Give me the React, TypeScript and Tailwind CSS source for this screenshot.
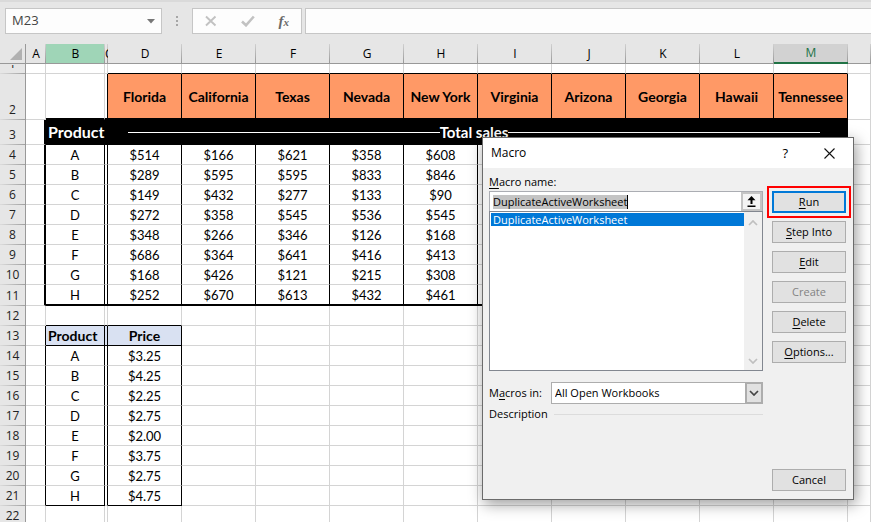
import React, { useState } from "react";

const GRID = "border-[#d4d4d4]";

const states = [
  "Florida",
  "California",
  "Texas",
  "Nevada",
  "New York",
  "Virginia",
  "Arizona",
  "Georgia",
  "Hawaii",
  "Tennessee",
];

const columns = ["A", "B", "C", "D", "E", "F", "G", "H", "I", "J", "K", "L", "M", ""];

const sales = [
  { row: 4, product: "A", values: ["$514", "$166", "$621", "$358", "$608"] },
  { row: 5, product: "B", values: ["$289", "$595", "$595", "$833", "$846"] },
  { row: 6, product: "C", values: ["$149", "$432", "$277", "$133", "$90"] },
  { row: 7, product: "D", values: ["$272", "$358", "$545", "$536", "$545"] },
  { row: 8, product: "E", values: ["$348", "$266", "$346", "$126", "$168"] },
  { row: 9, product: "F", values: ["$686", "$364", "$641", "$416", "$413"] },
  { row: 10, product: "G", values: ["$168", "$426", "$121", "$215", "$308"] },
  { row: 11, product: "H", values: ["$252", "$670", "$613", "$432", "$461"] },
];

const prices = [
  { row: 14, product: "A", price: "$3.25" },
  { row: 15, product: "B", price: "$4.25" },
  { row: 16, product: "C", price: "$2.25" },
  { row: 17, product: "D", price: "$2.75" },
  { row: 18, product: "E", price: "$2.00" },
  { row: 19, product: "F", price: "$3.75" },
  { row: 20, product: "G", price: "$2.75" },
  { row: 21, product: "H", price: "$4.75" },
];

function Toolbar() {
  return (
    <div className="flex bg-[#e6e6e6] border-t-2 border-[#dadada] pt-1.5 pb-2.5 pl-[5px]">
      <div className="flex h-[26px] w-[157px] items-center border border-[#c6c6c6] bg-[#fdfdfd] pr-1.5">
        <input
          aria-label="Name Box"
          defaultValue="M23"
          className="min-w-0 flex-1 bg-transparent pl-1.5 font-['Open_Sans',sans-serif] text-[13px] text-[#444] outline-none"
        />
        <button aria-label="Show names">
          <svg width="8" height="5" viewBox="0 0 8 5">
            <path d="M0 0h8L4 4.5z" fill="#777" />
          </svg>
        </button>
      </div>
      <div className="flex w-[30px] flex-col items-center justify-center gap-0.5">
        <span className="size-0.5 bg-[#a6a6a6]" />
        <span className="size-0.5 bg-[#a6a6a6]" />
        <span className="size-0.5 bg-[#a6a6a6]" />
      </div>
      <div className="mr-[3px] flex h-[26px] w-[110px] items-center justify-between border border-[#c6c6c6] bg-[#fdfdfd] px-3">
        <button aria-label="Cancel entry">
          <svg width="12" height="12" viewBox="0 0 12 12">
            <path d="M1 1.5l9.5 9M10.5 1.5L1 10.5" stroke="#c2c2c2" strokeWidth="1.9" fill="none" />
          </svg>
        </button>
        <button aria-label="Enter">
          <svg width="14" height="12" viewBox="0 0 14 12">
            <path d="M1 6.5l4 3.8L12.8 1.5" stroke="#c2c2c2" strokeWidth="2.6" fill="none" />
          </svg>
        </button>
        <button
          aria-label="Insert function"
          className="font-['Liberation_Serif',serif] text-[15px] leading-none font-bold text-[#6a6a6a] italic"
        >
          f<span className="text-[11px]">x</span>
        </button>
      </div>
      <input
        aria-label="Formula bar"
        className="h-[26px] min-w-0 flex-1 border border-r-0 border-[#c6c6c6] bg-[#fdfdfd] px-1 outline-none"
      />
    </div>
  );
}

function ColumnHeader({ name }: { name: string }) {
  let look = "border-b border-[#999] text-black";
  if (name === "B") look = "border-b border-[#999] bg-[#9fd5b7] text-black";
  if (name === "M") look = "border-b-2 border-[#217346] bg-[#d2d2d2] text-[#217346]";
  return (
    <th
      scope="col"
      className={`h-5 overflow-hidden bg-[linear-gradient(to_bottom,#d0d0d0,#999)] bg-[length:1px_100%] bg-right bg-no-repeat p-0 text-center font-['Open_Sans',sans-serif] text-[12px] leading-[18px] font-normal ${look}`}
    >
      {name}
    </th>
  );
}

function RowHeader({ n }: { n: number }) {
  return (
    <th
      scope="row"
      className="border-r border-[#999] bg-[#e6e6e6] bg-[linear-gradient(to_right,#dcdcdc,#a0a0a0)] bg-[length:100%_1px] bg-bottom bg-no-repeat p-0 pb-px text-center align-bottom font-['Open_Sans',sans-serif] text-[12px] leading-[19px] font-normal text-[#222]"
    >
      {n === 1 ? <div className="flex h-[8px] items-end justify-center overflow-hidden">{n}</div> : n}
    </th>
  );
}

function Cell({ className = "", children }: { className?: string; children?: React.ReactNode }) {
  return <td className={`overflow-hidden border-r border-b p-0 text-center whitespace-nowrap ${className}`}>{children}</td>;
}

function Blanks({ count, className = GRID }: { count: number; className?: string }) {
  return (
    <>
      {Array.from({ length: count }, (_, i) => (
        <Cell key={i} className={className} />
      ))}
    </>
  );
}

function Sheet() {
  return (
    <table className="w-full table-fixed border-separate border-spacing-0 bg-white font-['Lato',sans-serif] text-[13px] leading-[18px] text-black">
      <colgroup>
        <col className="w-[26px]" />
        <col className="w-[20px]" />
        <col className="w-[59px]" />
        <col className="w-[3px]" />
        {states.map((s) => (
          <col key={s} className="w-[74px]" />
        ))}
        <col />
      </colgroup>
      <thead>
        <tr className="bg-[#e6e6e6]">
          <th className="border-r border-b border-[#999] p-0 align-bottom">
            <svg width="12" height="12" viewBox="0 0 12 12" className="mb-[3px] ml-auto mr-[3px] block">
              <path d="M12 0v12H0z" fill="#b1b1b1" />
            </svg>
          </th>
          {columns.map((c) => (
            <ColumnHeader key={c} name={c} />
          ))}
        </tr>
      </thead>
      <tbody>
        <tr className="h-[10px]">
          <RowHeader n={1} />
          <Blanks count={3} />
          <Blanks count={10} className="border-r-[#d4d4d4] border-b-black" />
          <Blanks count={1} />
        </tr>
        <tr className="h-[46px] text-[14px] font-bold">
          <RowHeader n={2} />
          <Blanks count={1} />
          <Cell className="border-b-2 border-r-[#d4d4d4] border-b-black" />
          <Cell className="border-b-2 border-black" />
          {states.map((s) => (
            <Cell key={s} className="border-b-2 border-black bg-[#ff9966] pt-0.5">
              {s}
            </Cell>
          ))}
          <Blanks count={1} />
        </tr>
        <tr className="h-[25px] text-[16px] font-bold text-white">
          <RowHeader n={3} />
          <Cell className="border-r-2 border-r-black border-b-[#d4d4d4]" />
          <td className="border-b border-black bg-black p-0 pl-0.5 text-left">Product</td>
          <td colSpan={11} className="border-b border-black bg-black p-0 pr-[28px] pl-[23px]">
            <div className="flex items-center">
              <span className="h-px flex-1 bg-white" />
              <span className="text-[15px]">Total sales</span>
              <span className="h-px flex-1 bg-white" />
            </div>
          </td>
          <Blanks count={1} />
        </tr>
        {sales.map(({ row, product, values }) => {
          const last = row === 11;
          const side = last ? "border-b-2 border-black" : "border-r-black border-b-[#d4d4d4]";
          return (
            <tr key={row} className={last ? "h-[21px]" : "h-[20px]"}>
              <RowHeader n={row} />
              <Cell className="border-r-2 border-r-black border-b-[#d4d4d4]" />
              <Cell className={side}>{product}</Cell>
              <Cell className={side} />
              {values.map((v, i) => (
                <Cell key={i} className={side}>
                  {v}
                </Cell>
              ))}
              <Blanks count={5} className={side} />
              <Blanks count={1} />
            </tr>
          );
        })}
        <tr className="h-[20px]">
          <RowHeader n={12} />
          <Blanks count={1} />
          <Blanks count={3} className="border-r-[#d4d4d4] border-b-black" />
          <Blanks count={10} />
        </tr>
        <tr className="h-[20px] text-[14px] font-bold">
          <RowHeader n={13} />
          <Cell className="border-r-black border-b-[#d4d4d4]" />
          <td className="border-r border-b border-black bg-[#d9e1f2] p-0 pl-0.5 text-left">Product</td>
          <Cell className="border-black bg-[#d9e1f2]" />
          <Cell className="border-black bg-[#d9e1f2]">Price</Cell>
          <Blanks count={10} />
        </tr>
        {prices.map(({ row, product, price }) => {
          const side = row === 21 ? "border-black" : "border-r-black border-b-[#d4d4d4]";
          return (
            <tr key={row} className="h-[20px]">
              <RowHeader n={row} />
              <Cell className="border-r-black border-b-[#d4d4d4]" />
              <Cell className={side}>{product}</Cell>
              <Cell className="border-r-black border-b-[#d4d4d4]" />
              <Cell className={side}>{price}</Cell>
              <Blanks count={10} />
            </tr>
          );
        })}
        <tr className="h-[20px]">
          <RowHeader n={22} />
          <Blanks count={14} />
        </tr>
      </tbody>
    </table>
  );
}

function DialogButton({ hot, rest, className = "border border-[#adadad]", disabled }: {
  hot?: string;
  rest: string;
  className?: string;
  disabled?: boolean;
}) {
  return (
    <button
      disabled={disabled}
      className={`h-[22px] w-full bg-[#e1e1e1] text-center leading-[18px] disabled:text-[#838383] ${className}`}
    >
      {hot && <span className="underline underline-offset-2">{hot}</span>}
      {rest}
    </button>
  );
}

function Chevron({ up, color }: { up?: boolean; color: string }) {
  return (
    <svg width="10" height="6" viewBox="0 0 10 6" className="block">
      <path d={up ? "M1 5l4-4 4 4" : "M1 1l4 4 4-4"} stroke={color} strokeWidth="1.7" fill="none" />
    </svg>
  );
}

function MacroDialog() {
  const [scope, setScope] = useState("All Open Workbooks");

  return (
    <div
      role="dialog"
      aria-label="Macro"
      className="absolute top-[137px] left-[482px] flex h-[363px] w-[372px] flex-col border border-[#6b6b6b] bg-[#f0f0f0] font-['Open_Sans',sans-serif] text-[11px] leading-[16px] text-black shadow-[2px_4px_14px_rgba(0,0,0,0.4)]"
    >
      <div className="flex h-[30px] shrink-0 items-center bg-white pr-[18px] pl-2">
        <h1 className="flex-1 text-[12px]">Macro</h1>
        <button aria-label="Help" className="mr-9 text-[13px]">
          ?
        </button>
        <button aria-label="Close">
          <svg width="11" height="11" viewBox="0 0 11 11" className="block">
            <path d="M.5.5l10 10M10.5.5l-10 10" stroke="#111" strokeWidth="1.1" fill="none" />
          </svg>
        </button>
      </div>

      <div className="flex flex-1 gap-[9px] pr-[7px] pb-2 pl-1.5">
        <div className="flex flex-1 flex-col pt-1.5">
          <label htmlFor="macro-name" className="mb-px">
            <span className="underline underline-offset-2">M</span>acro name:
          </label>
          <div className="flex h-[20px] items-center border border-b-0 border-[#abadb3] bg-white pl-[3px]">
            <input
              id="macro-name"
              readOnly
              value="DuplicateActiveWorksheet"
              className="field-sizing-content h-[14px] border-r border-black bg-[#c4c4c4] outline-none"
            />
            <button
              aria-label="Select reference"
              className="ml-auto flex h-[19px] w-[21px] items-center justify-center border-2 border-[#c4c4c4] bg-[#f4f4f4]"
            >
              <svg width="9" height="11" viewBox="0 0 9 11">
                <path d="M4.5 0L8.5 4.2H5.5V8h-2V4.2H.5zM.5 9.5h8V11h-8z" fill="#000" />
              </svg>
            </button>
          </div>
          <div className="flex h-[160px] border border-[#828790] bg-white">
            <ul role="listbox" aria-label="Macros" className="flex-1 p-px pr-0">
              <li
                role="option"
                aria-selected="true"
                className="h-[13px] bg-[#0078d7] pl-0.5 leading-[13px] text-white"
              >
                DuplicateActiveWorksheet
              </li>
            </ul>
            <div className="flex w-[18px] flex-col items-center justify-between bg-[#f0f0f0] pt-2 pb-1.5">
              <Chevron up color="#bfbfbf" />
              <Chevron color="#bfbfbf" />
            </div>
          </div>
          <div className="mt-[11px] flex h-[22px] items-center">
            <label htmlFor="macro-scope" className="w-[62px]">
              M<span className="underline underline-offset-2">a</span>cros in:
            </label>
            <div className="relative flex-1">
              <select
                id="macro-scope"
                value={scope}
                onChange={(e) => setScope(e.target.value)}
                className="block h-[22px] w-full appearance-none border border-[#adadad] bg-white pl-[3px] outline-none"
              >
                <option>All Open Workbooks</option>
                <option>This Workbook</option>
              </select>
              <span className="pointer-events-none absolute inset-y-0 right-0 flex w-[18px] items-center justify-center border-2 border-[#adadad] bg-[#e1e1e1]">
                <Chevron color="#444" />
              </span>
            </div>
          </div>
          <div className="mt-0.5 flex items-center gap-1.5">
            <span>Description</span>
            <span className="h-px flex-1 bg-[#dcdcdc]" />
          </div>
        </div>

        <div className="flex w-[74px] flex-col gap-2 pt-[23px]">
          <DialogButton
            hot="R"
            rest="un"
            className="border-2 border-[#0078d7] outline-2 outline-offset-3 outline-[#ff0000]"
          />
          <DialogButton hot="S" rest="tep Into" />
          <DialogButton hot="E" rest="dit" />
          <DialogButton rest="Create" disabled />
          <DialogButton hot="D" rest="elete" />
          <DialogButton hot="O" rest="ptions..." />
          <div className="mt-auto">
            <DialogButton rest="Cancel" />
          </div>
        </div>
      </div>
    </div>
  );
}

export default function App() {
  return (
    <div className="relative h-screen overflow-hidden bg-white">
      <Toolbar />
      <Sheet />
      <MacroDialog />
    </div>
  );
}
